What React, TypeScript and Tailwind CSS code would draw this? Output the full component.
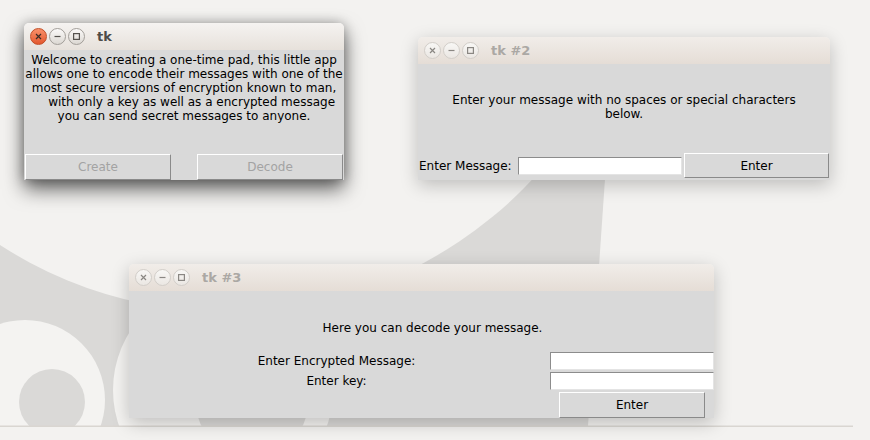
import React from 'react';

type Kind = 'close' | 'min' | 'max';

const TitleButton: React.FC<{ kind: Kind; active: boolean }> = ({ kind, active }) => {
  let look = 'border-[#d2cec9] from-[#f8f7f5] to-[#ebe7e3] text-[#8a8783]';
  if (active && kind === 'close') look = 'border-[#c24e27] from-[#f8906a] to-[#e3572c] text-[#3a2c26]';
  else if (active) look = 'border-[#a29e99] from-[#fbfaf9] to-[#dcd8d3] text-[#55524e]';

  return (
    <div className={`flex h-[17px] w-[17px] items-center justify-center rounded-full border bg-linear-to-b ${look}`}>
      <svg width="15" height="15" viewBox="0 0 15 15" fill="none" stroke="currentColor" strokeWidth="1.2">
        {kind === 'close' && <path d="M5 5 L10 10 M10 5 L5 10" />}
        {kind === 'min' && <path d="M4.5 7.5 H10.5" />}
        {kind === 'max' && <rect x="4.6" y="4.6" width="5.8" height="5.8" />}
      </svg>
    </div>
  );
};

interface WindowProps {
  title: string;
  active?: boolean;
  className: string;
  bodyClass: string;
  children: React.ReactNode;
}

const Window: React.FC<WindowProps> = ({ title, active = false, className, bodyClass, children }) => (
  <div
    className={`absolute rounded-t-[5px] ${
      active
        ? 'shadow-[0_9px_20px_rgba(0,0,0,0.6),0_0_12px_rgba(0,0,0,0.25)]'
        : 'shadow-[0_5px_18px_rgba(0,0,0,0.22)]'
    } ${className}`}
  >
    <div
      className={`flex h-[27px] items-center gap-[2px] rounded-t-[5px] bg-linear-to-b pl-[6px] ${
        active ? 'from-[#f5f3f1] to-[#e7e1db]' : 'from-[#f1ede9] to-[#e5ddd6]'
      }`}
    >
      <TitleButton kind="close" active={active} />
      <TitleButton kind="min" active={active} />
      <TitleButton kind="max" active={active} />
      <span
        className={`ml-[10px] text-[13px] font-bold ${active ? 'text-[#4d4b48]' : 'text-[#aba8a4]'}`}
      >
        {title}
      </span>
    </div>
    <div className={`bg-[#d9d9d9] ${bodyClass}`}>{children}</div>
  </div>
);

const TkButton: React.FC<{ label: string; disabled?: boolean; className: string }> = ({
  label,
  disabled,
  className,
}) => (
  <div
    className={`flex items-center justify-center border border-t-white border-l-white border-b-[#8a8a8a] border-r-[#8a8a8a] bg-[#d9d9d9] ${
      disabled ? 'text-[#a3a3a3]' : 'text-black'
    } ${className}`}
  >
    {label}
  </div>
);

const TkEntry: React.FC<{ className?: string }> = ({ className = '' }) => (
  <div
    className={`h-[18px] w-[164px] border border-t-[#8c8c8c] border-l-[#8c8c8c] border-b-[#e4e4e4] border-r-[#e4e4e4] bg-white ${className}`}
  />
);

const Wallpaper: React.FC = () => (
  <svg className="absolute inset-0" width="870" height="440" viewBox="0 0 870 440">
    <rect width="870" height="440" fill="#f3f2f0" />
    <path d="M0 150 H607 L588 426 H0 Z" fill="#dad9d7" />
    <circle cx="227" cy="-106" r="418" fill="#f3f2f0" />
    <circle cx="25" cy="400" r="80" fill="#f4f3f1" />
    <circle cx="52" cy="402" r="33" fill="#dad9d7" />
    <circle cx="223" cy="390" r="110" fill="#f4f3f1" />
    <circle cx="252" cy="402" r="56" fill="#dad9d7" />
    <rect y="427" width="870" height="13" fill="#f3f2f0" />
    <rect y="425.5" width="853" height="1.5" fill="#d9d6d1" />
  </svg>
);

export default function App() {
  return (
    <div className="relative h-[440px] w-[870px] overflow-hidden bg-[#f3f2f0] font-['DejaVu_Sans',sans-serif] text-[12px] text-black">
      <Wallpaper />

      {/* tk #3 */}
      <Window title="tk #3" className="left-[129px] top-[264px] w-[585px]" bodyClass="flex h-[127px] flex-col pt-[30px]">
        <div className="pl-[22px] text-center leading-[14px]">Here you can decode your message.</div>
        <div className="mt-[17px] grid grid-cols-[421px_164px] grid-rows-[20px_20px_26px]">
          <div className="pr-[6px] text-center leading-[18px]">Enter Encrypted Message:</div>
          <TkEntry />
          <div className="pr-[6px] text-center leading-[18px]">Enter key:</div>
          <TkEntry />
          <div className="col-start-2 flex justify-center">
            <TkButton label="Enter" className="h-[26px] w-[146px]" />
          </div>
        </div>
      </Window>

      {/* tk #2 */}
      <Window title="tk #2" className="left-[418px] top-[37px] w-[412px]" bodyClass="flex h-[116px] flex-col pt-[29px]">
        <div className="text-center leading-[14px]">
          Enter your message with no spaces or special characters
          <br />
          below.
        </div>
        <div className="mt-[32px] flex items-center pl-[1px]">
          <div className="w-[99px]">Enter Message:</div>
          <TkEntry />
          <TkButton label="Enter" className="ml-[2px] h-[25px] w-[145px]" />
        </div>
      </Window>

      {/* tk (active) */}
      <Window title="tk" active className="left-[24px] top-[23px] w-[320px]" bodyClass="flex h-[130px] flex-col pt-[3px]">
        <div className="whitespace-pre text-center leading-[14px]">
          {'Welcome to creating a one-time pad, this little app\nallows one to encode their messages with one of the\nmost secure versions of encryption known to man,\n    with only a key as well as a encrypted message\nyou can send secret messages to anyone.'}
        </div>
        <div className="mt-auto flex justify-between px-[1px]">
          <TkButton label="Create" disabled className="h-[26px] w-[146px]" />
          <TkButton label="Decode" disabled className="h-[26px] w-[146px]" />
        </div>
      </Window>
    </div>
  );
}
